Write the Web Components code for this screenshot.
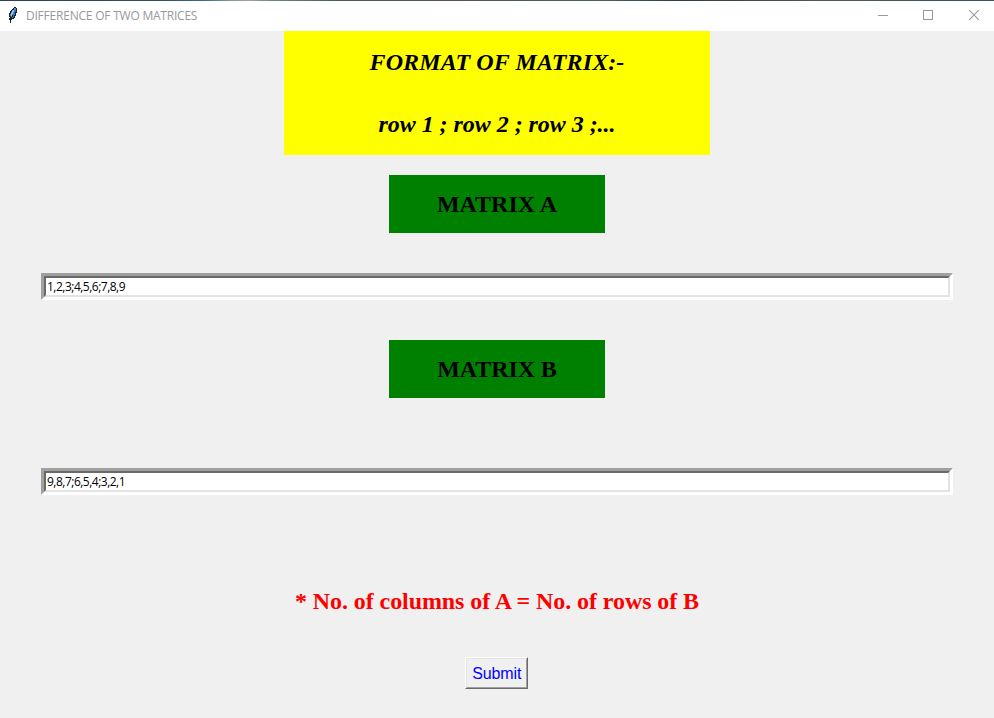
<!DOCTYPE html>
<html lang="en">
<head>
<meta charset="utf-8">
<title>DIFFERENCE OF TWO MATRICES</title>
<style>
html,body{margin:0;height:100%;background:#f0f0f0;overflow:hidden}
</style>
</head>
<body>
<matrix-window></matrix-window>
<script>
const define = (name, html) => {
  const t = document.createElement('template');
  t.innerHTML = html;
  customElements.define(name, class extends HTMLElement {
    constructor() {
      super();
      this.attachShadow({mode: 'open'}).append(t.content.cloneNode(true));
    }
  });
};

define('title-bar', `
<style>
:host{display:flex;align-items:center;box-sizing:border-box;height:31px;background:#fff;font:12px/16px "Open Sans","Noto Sans",sans-serif;color:#999;
 border-top:1px solid;border-image:linear-gradient(90deg,#2c424c 0,#34505c 160px,#3c6a88 205px,#7d989c 230px,#a2a4a0 250px,#6f8788 270px,#4b585a 340px,#4d594f 480px,#4b6063 600px,#303c46 680px,#4e5c4f 830px,#3c4d68 994px) 1}
.icon{width:10px;height:16px;margin:0 0 2px 8px;flex:none}
.title{margin-left:8px;flex:1;white-space:nowrap;letter-spacing:-.22px}
.controls{width:134px;height:30px;flex:none}
</style>
<svg class="icon" viewBox="0 0 10 16" shape-rendering="crispEdges">
 <path d="M6 0h2v1h1v5H8v3H7v2H6v1H4v1H3v3H2v-3H1v-2h1v-1H1V6h1V4h1V3h1V2h1V1h1z" fill="#1a222c"/>
 <path d="M6 1h2v4H7v3H6v2H5v1H3V9H2V7h1V5h1V3h2z" fill="#4687cf"/>
 <path d="M5 3h1v2H5v2H4v2H3V6h1V4h1z" fill="#9bc6ee"/>
 <path d="M7 3h1v2H7v2H6v2H5V7h1V5h1z" fill="#2c5f9e"/>
 <path d="M4 8h1v2H4v1H3v-1h1z" fill="#1a222c"/>
</svg>
<span class="title"><slot></slot></span>
<svg class="controls" viewBox="0 0 134 30" fill="none" stroke="#999">
 <path d="M18 14.5h10M63.5 9.5h9v9h-9z" shape-rendering="crispEdges"/>
 <path d="M109.2 9.2l9.6 9.6M118.8 9.2l-9.6 9.6" stroke-width="1.1"/>
</svg>`);

define('format-banner', `
<style>
:host{display:grid;grid-template-rows:62px 62px;justify-items:center;width:426px;background:#ff0;color:#000;white-space:nowrap;
 font:italic bold 24px/62px "Liberation Serif",serif}
slot[name=heading]{letter-spacing:.11px}
slot[name=example]{letter-spacing:-.04px}
</style>
<slot name="heading"></slot><slot name="example"></slot>`);

define('matrix-label', `
<style>
:host{display:block;box-sizing:border-box;width:216px;height:58px;background:#008000;color:#000;text-align:center;white-space:nowrap;
 font:bold 24px/58px "Liberation Serif",serif}
</style><slot></slot>`);

define('matrix-entry', `
<style>
:host{display:block;box-sizing:border-box;width:912px;height:27px;border:3px solid;border-color:#a0a0a0 #fff #fff #a0a0a0}
.field{box-sizing:border-box;height:21px;border:2px solid;border-color:#696969 #e3e3e3 #e3e3e3 #696969;background:#fff;color:#000;
 padding-left:1px;font:12px/17px "Open Sans","Noto Sans",sans-serif;white-space:nowrap;letter-spacing:-.51px}
</style><div class="field"><slot></slot></div>`);

define('size-note', `
<style>
:host{display:block;color:#f00;white-space:nowrap;font:bold 24px/36px "Liberation Serif",serif;letter-spacing:-.08px}
</style><slot></slot>`);

define('submit-button', `
<style>
:host{display:block}
button{display:block;box-sizing:border-box;width:63px;height:32px;padding:0;border:1px solid;border-color:#fff #696969 #696969 #fff;border-radius:0;background:#f0f0f0;color:#00f}
span{display:block;box-sizing:border-box;height:30px;border:1px solid;border-color:#e3e3e3 #a0a0a0 #a0a0a0 #e3e3e3;font:16px/29px "Liberation Sans",sans-serif;letter-spacing:-.1px;padding-left:.5px}
</style><button type="button"><span><slot></slot></span></button>`);

define('matrix-window', `
<style>
:host{display:flex;flex-direction:column;height:718px;background:#f0f0f0}
main{display:flex;flex-direction:column;align-items:center}
.a{margin-top:20px}.ea{margin-top:40px}.b{margin-top:40px;letter-spacing:-.1px}.eb{margin-top:70px}
size-note{margin-top:88px}submit-button{margin:38px 1px 0 0}
</style>
<title-bar>DIFFERENCE OF TWO MATRICES</title-bar>
<main>
 <format-banner><span slot="heading">FORMAT OF MATRIX:-</span><span slot="example">row 1 ; row 2 ; row 3 ;...</span></format-banner>
 <matrix-label class="a">MATRIX A</matrix-label>
 <matrix-entry class="ea">1,2,3;4,5,6;7,8,9</matrix-entry>
 <matrix-label class="b">MATRIX B</matrix-label>
 <matrix-entry class="eb">9,8,7;6,5,4;3,2,1</matrix-entry>
 <size-note>* No. of columns of A = No. of rows of B</size-note>
 <submit-button>Submit</submit-button>
</main>`);
</script>
</body>
</html>
